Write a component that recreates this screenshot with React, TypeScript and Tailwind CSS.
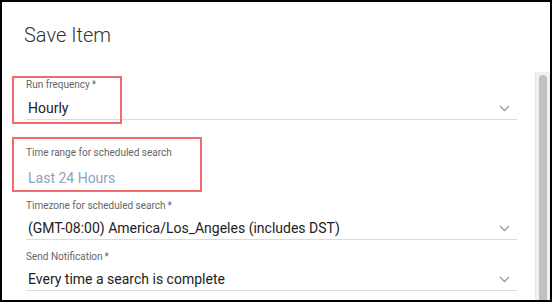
import React from 'react';

type FieldProps = {
  label: string;
  value: string;
  required?: boolean;
  muted?: boolean;
  select?: boolean;
  className?: string;
  gap?: string;
};

const Chevron: React.FC = () => (
  <svg width="11" height="7" viewBox="0 0 11 7" className="mr-[7px]">
    <path d="M1 1l4.5 4.5L10 1" fill="none" stroke="#8c9db3" strokeWidth="1.3" />
  </svg>
);

const Field: React.FC<FieldProps> = ({ label, value, required, muted, select, className, gap = 'mt-[7px]' }) => (
  <div className={className}>
    <div className="text-[10px] leading-[12px] text-[#666]">
      {label}
      {required && <span className="ml-[2px]">*</span>}
    </div>
    <div
      className={
        gap +
        ' h-[23px] flex items-center justify-between pl-[2px] ' +
        (select ? 'border-b border-[#dcdcdc]' : 'border-b border-transparent')
      }
    >
      <span className={'text-[14px] ' + (muted ? 'text-[#8fa3bd]' : 'text-[#222]')}>{value}</span>
      {select && <Chevron />}
    </div>
  </div>
);

const App: React.FC = () => {
  return (
    <div
      className="relative w-[552px] h-[302px] border-2 border-black bg-white overflow-hidden flex flex-col"
      style={{ fontFamily: 'Roboto, "Liberation Sans", sans-serif' }}
    >
      {/* Title */}
      <div className="h-[70px] pl-[22px] pt-[20px]">
        <h1 className="text-[20px] leading-[26px] font-light text-[#333]">Save Item</h1>
      </div>

      <div className="flex flex-1 min-h-0">
        {/* Form */}
        <div className="flex-1 pl-[24px] pr-[18px] pt-[7px]">
          <Field label="Run frequency" value="Hourly" required select gap="mt-[6px]" />
          <Field className="mt-[27px]" gap="mt-[8px]" label="Time range for scheduled search" value="Last 24 Hours" muted />
          <Field className="mt-[10px]" gap="mt-[5px]" label="Timezone for scheduled search" value="(GMT-08:00) America/Los_Angeles (includes DST)" required select />
          <Field className="mt-[11px]" gap="mt-[5px]" label="Send Notification" value="Every time a search is complete" required select />
        </div>

        {/* Scrollbar */}
        <div className="w-[15px] bg-[#f1f1f1] border-l border-[#e8e8e8] flex justify-center pt-[3px]">
          <div className="w-[8px] h-full bg-[#c1c1c1] rounded-t-full" />
        </div>
      </div>

      {/* Annotation boxes */}
      <div className="absolute left-[10px] top-[74px] w-[110px] h-[48px] border-2 border-[#f26b6b]" />
      <div className="absolute left-[10px] top-[135px] w-[190px] h-[55px] border-2 border-[#f26b6b]" />
    </div>
  );
};

export default App;
